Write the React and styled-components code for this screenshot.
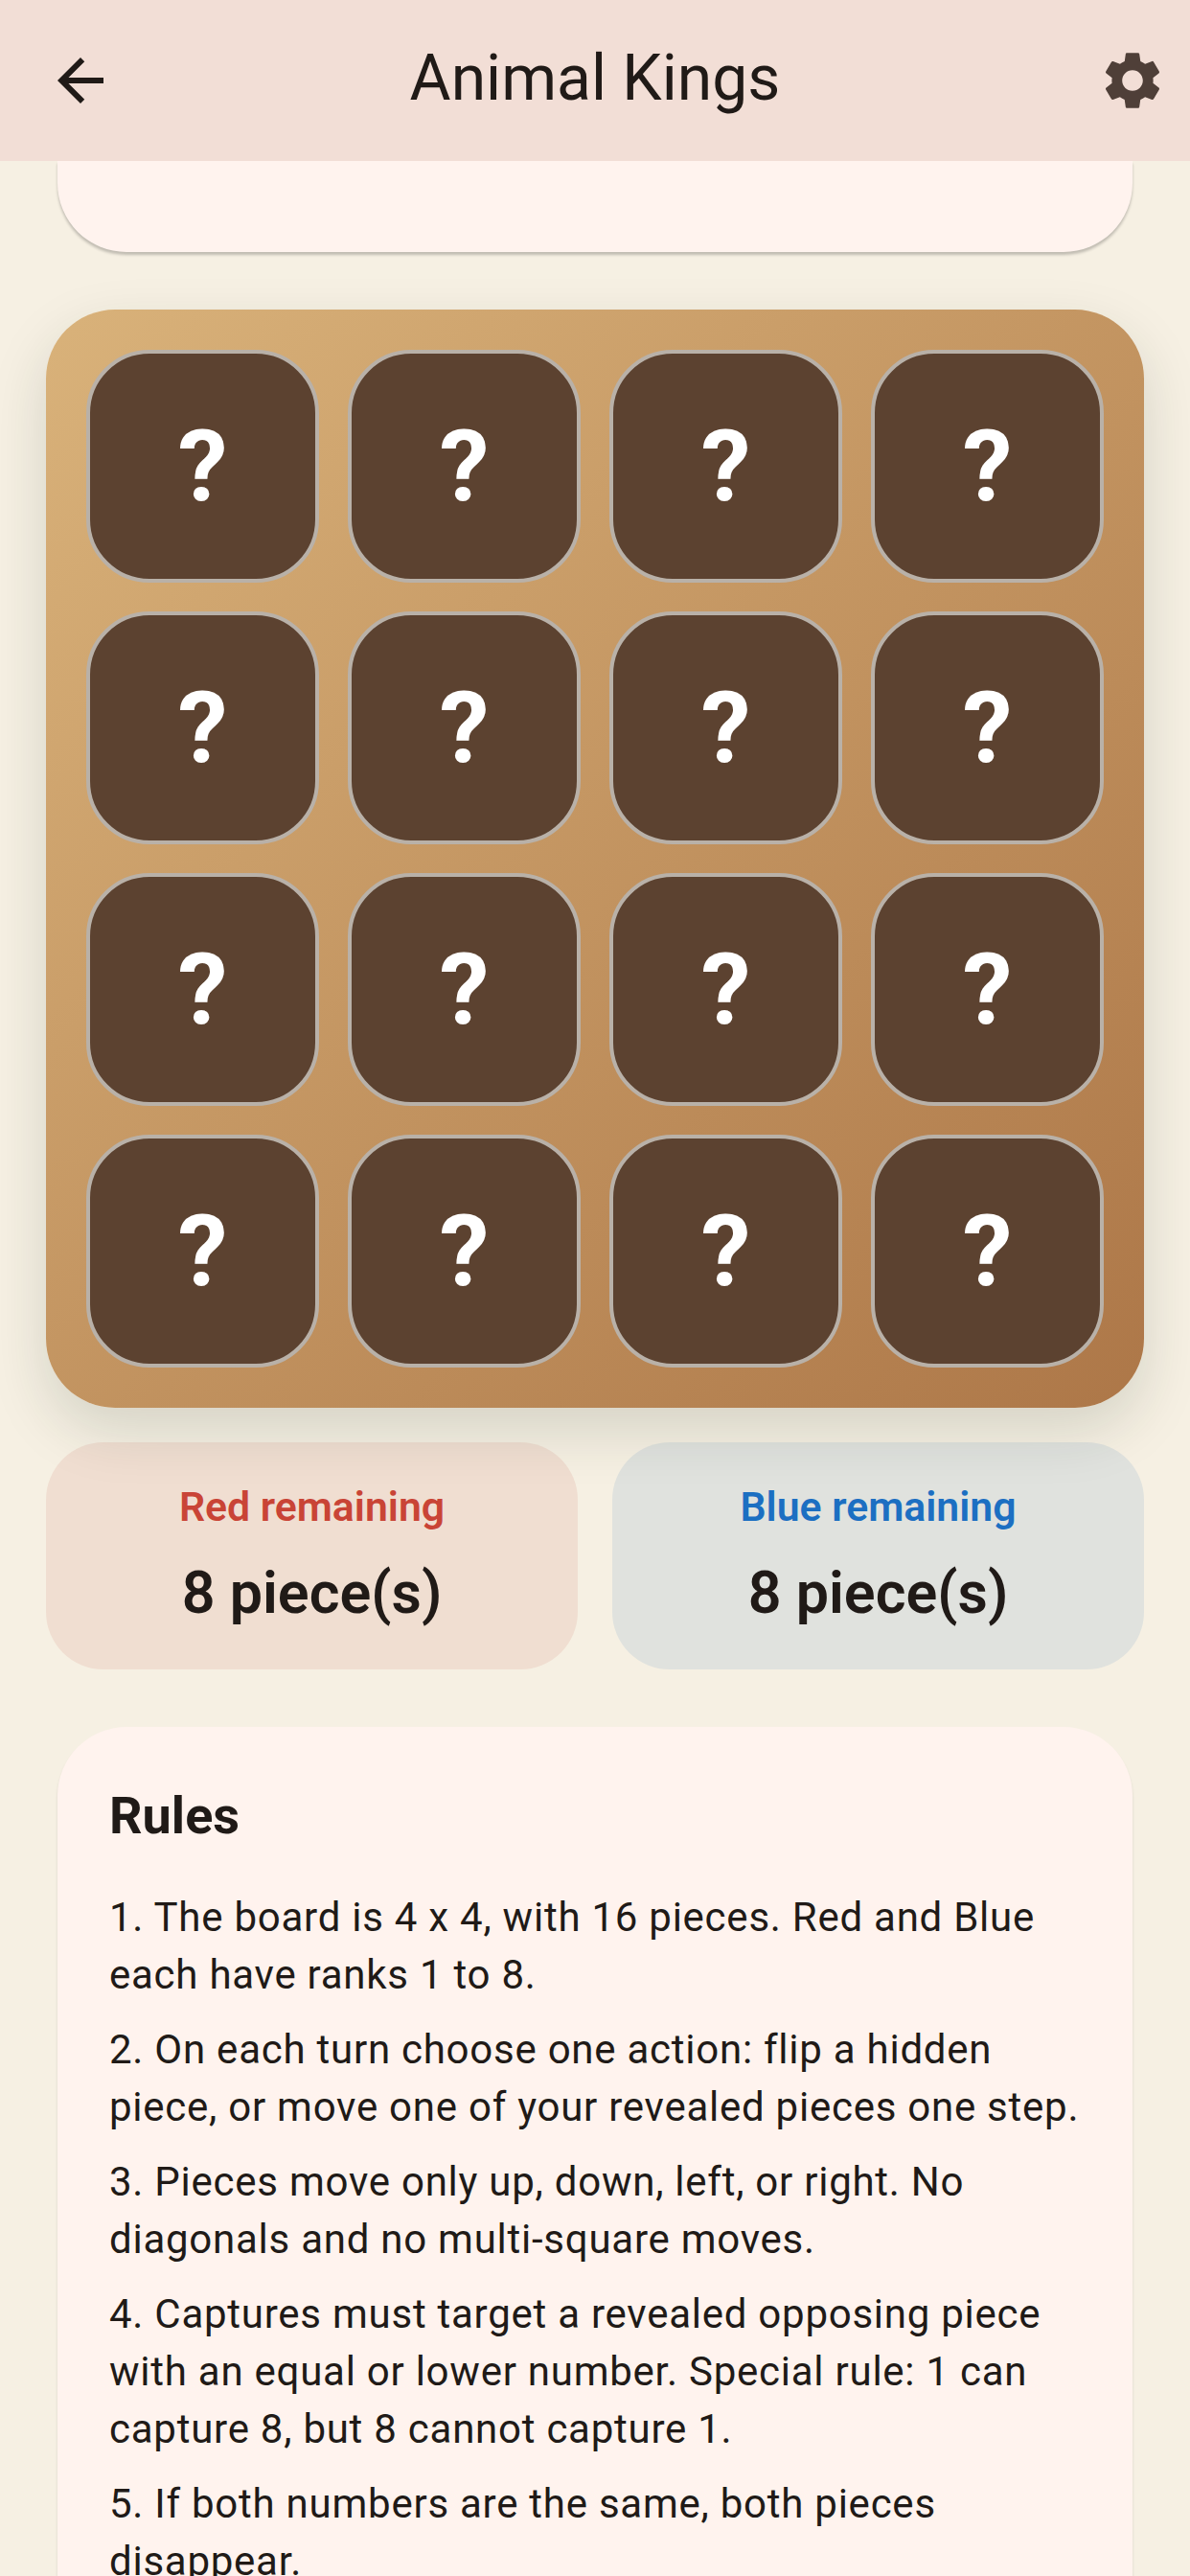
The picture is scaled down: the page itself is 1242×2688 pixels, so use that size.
import React from "react";
import styled, { createGlobalStyle } from "styled-components";

const Global = createGlobalStyle`
  html, body { margin: 0; padding: 0; background: #f6f0e3; }
  * { box-sizing: border-box; }
`;

const Page = styled.div`
  width: 1242px;
  height: 2688px;
  overflow: hidden;
  display: flex;
  flex-direction: column;
  background: #f6f0e3;
  font-family: Roboto, "Liberation Sans", sans-serif;
  color: #201a17;
`;

const AppBar = styled.header`
  position: relative;
  z-index: 2;
  flex: none;
  height: 168px;
  background: #f2ded6;
  display: flex;
  align-items: center;
  justify-content: space-between;
  padding: 0 24px 0 48px;
`;

const Title = styled.h1`
  position: absolute;
  left: 0;
  right: 0;
  top: 0;
  margin: 0;
  text-align: center;
  font-size: 66px;
  line-height: 164px;
  font-weight: 400;
  color: #201a17;
`;

const Scroll = styled.main`
  flex: 1;
  min-height: 0;
  overflow: hidden;
  padding: 0 48px;
  display: flex;
  flex-direction: column;
`;

const TopCard = styled.div`
  flex: none;
  height: 95px;
  margin: 0 12px;
  background: #fff3ee;
  border-radius: 0 0 72px 72px;
  box-shadow: 0 3px 3px rgba(0, 0, 0, 0.22);
`;

const Board = styled.section`
  position: relative;
  z-index: 1;
  flex: none;
  margin-top: 60px;
  width: 1146px;
  height: 1146px;
  padding: 42px;
  border-radius: 72px;
  background: linear-gradient(135deg, #d9b27a 0%, #ad7748 100%);
  box-shadow: 0 24px 60px rgba(30, 45, 35, 0.15);
  display: grid;
  grid-template-columns: repeat(4, 243px);
  grid-template-rows: repeat(4, 243px);
  gap: 30px;
`;

const Tile = styled.div`
  background: #5c4230;
  border: 4.5px solid #b9b1a8;
  border-radius: 66px;
  display: flex;
  align-items: center;
  justify-content: center;
  color: #fff;
  font-size: 104px;
  font-weight: 700;
  line-height: 1;
`;

const Stats = styled.section`
  flex: none;
  margin-top: 36px;
  display: grid;
  grid-template-columns: 555px 555px;
  gap: 36px;
`;

const Stat = styled.div`
  height: 237px;
  border-radius: 60px;
  background: ${(p) => p.$bg};
  display: flex;
  flex-direction: column;
  align-items: center;
  padding-top: 37px;
`;

const StatLabel = styled.div`
  font-size: 42.75px;
  line-height: 60px;
  font-weight: 600;
  color: ${(p) => p.$color};
`;

const StatValue = styled.div`
  margin-top: 18px;
  font-size: 61px;
  line-height: 84px;
  font-weight: 600;
  color: #201a17;
`;

const RulesCard = styled.section`
  flex: none;
  margin: 60px 12px 0;
  padding: 57px 54px;
  border-radius: 72px;
  background: #fff3ee;
  box-shadow: 0 3px 3px rgba(0, 0, 0, 0.12);
`;

const RulesTitle = styled.h2`
  margin: 0 0 40px;
  font-size: 54px;
  line-height: 72px;
  font-weight: 700;
  color: #201a17;
`;

const Rule = styled.p`
  margin: 0 0 18px;
  font-size: 42px;
  line-height: 60px;
  letter-spacing: 0.75px;
  color: #201a17;
`;

const BackIcon = () => (
  <svg width="72" height="72" viewBox="0 0 24 24" fill="#201a17">
    <path d="M20 11H7.83l5.59-5.59L12 4l-8 8 8 8 1.41-1.41L7.83 13H20v-2z" />
  </svg>
);

const GearIcon = () => (
  <svg width="72" height="72" viewBox="0 0 24 24" fill="#4f3f38">
    <path d="M19.14 12.94c.04-.3.06-.61.06-.94 0-.32-.02-.64-.07-.94l2.03-1.58a.49.49 0 0 0 .12-.61l-1.92-3.32a.488.488 0 0 0-.59-.22l-2.39.96c-.5-.38-1.03-.7-1.62-.94l-.36-2.54a.484.484 0 0 0-.48-.41h-3.84c-.24 0-.43.17-.47.41l-.36 2.54c-.59.24-1.13.57-1.62.94l-2.39-.96c-.22-.08-.47 0-.59.22L2.74 8.87c-.12.21-.08.47.12.61l2.03 1.58c-.05.3-.09.63-.09.94s.02.64.07.94l-2.03 1.58a.49.49 0 0 0-.12.61l1.92 3.32c.12.22.37.29.59.22l2.39-.96c.5.38 1.03.7 1.62.94l.36 2.54c.05.24.24.41.48.41h3.84c.24 0 .44-.17.47-.41l.36-2.54c.59-.24 1.13-.56 1.62-.94l2.39.96c.22.08.47 0 .59-.22l1.92-3.32c.12-.22.07-.47-.12-.61l-2.01-1.58zM12 15.6c-1.98 0-3.6-1.62-3.6-3.6s1.62-3.6 3.6-3.6 3.6 1.62 3.6 3.6-1.62 3.6-3.6 3.6z" />
  </svg>
);

const rules = [
  "1. The board is 4 x 4, with 16 pieces. Red and Blue each have ranks 1 to 8.",
  "2. On each turn choose one action: flip a hidden piece, or move one of your revealed pieces one step.",
  "3. Pieces move only up, down, left, or right. No diagonals and no multi-square moves.",
  "4. Captures must target a revealed opposing piece with an equal or lower number. Special rule: 1 can capture 8, but 8 cannot capture 1.",
  "5. If both numbers are the same, both pieces disappear.",
];

export default function App() {
  return (
    <Page>
      <Global />
      <AppBar>
        <BackIcon />
        <Title>Animal Kings</Title>
        <GearIcon />
      </AppBar>
      <Scroll>
        <TopCard />
        <Board>
          {Array.from({ length: 16 }, (_, i) => (
            <Tile key={i}>?</Tile>
          ))}
        </Board>
        <Stats>
          <Stat $bg="#f0ded1">
            <StatLabel $color="#c94436">Red remaining</StatLabel>
            <StatValue>8 piece(s)</StatValue>
          </Stat>
          <Stat $bg="#e0e2de">
            <StatLabel $color="#1c6fc2">Blue remaining</StatLabel>
            <StatValue>8 piece(s)</StatValue>
          </Stat>
        </Stats>
        <RulesCard>
          <RulesTitle>Rules</RulesTitle>
          {rules.map((r) => (
            <Rule key={r}>{r}</Rule>
          ))}
        </RulesCard>
      </Scroll>
    </Page>
  );
}
